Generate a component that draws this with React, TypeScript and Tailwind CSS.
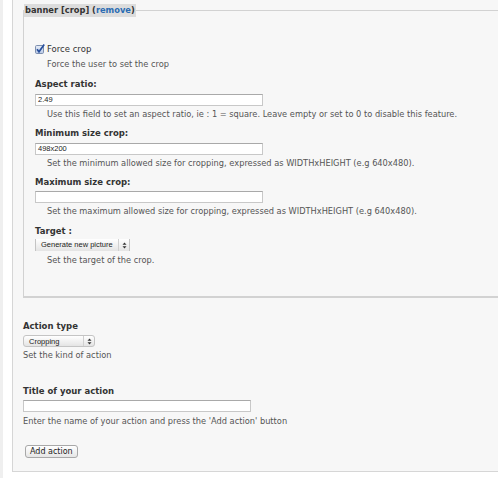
import type { ReactNode } from "react";

const FONT = { fontFamily: '"DejaVu Sans", Verdana, sans-serif' };

function Label({ children }: { children: ReactNode }) {
  return (
    <div className="h-[14px] leading-[14px] text-[8.5px] font-bold text-[#333]">
      {children}
    </div>
  );
}

function Help({ children, indent = true }: { children: ReactNode; indent?: boolean }) {
  return (
    <div
      className={`h-[14px] leading-[14px] text-[8.25px] text-[#555] whitespace-nowrap ${
        indent ? "pl-[12px]" : ""
      }`}
    >
      {children}
    </div>
  );
}

function TextInput({ value, className = "" }: { value?: string; className?: string }) {
  return (
    <div
      className={`h-[12px] w-[228px] bg-white border border-[#c8c8c8] border-t-[#a9a9a9] pl-[2px] text-[7.5px] leading-[10px] text-[#222] ${className}`}
      style={{ fontFamily: '"Liberation Sans", Arial, sans-serif' }}
    >
      {value}
    </div>
  );
}

function Arrows() {
  return (
    <svg width="5" height="7" viewBox="0 0 5 7">
      <path d="M2.5 0.5 L4.5 2.8 L0.5 2.8 Z" fill="#333" />
      <path d="M2.5 6.5 L4.5 4.2 L0.5 4.2 Z" fill="#333" />
    </svg>
  );
}

function Select({ label, width, rounded }: { label: string; width: string; rounded?: boolean }) {
  return (
    <div
      className={`flex h-[12px] items-stretch border border-[#c4c4c4] bg-gradient-to-b from-[#ffffff] to-[#e4e4e4] text-[7.5px] text-[#222] ${width} ${
        rounded ? "rounded-[3px]" : "border-y-0"
      }`}
      style={{ fontFamily: '"Liberation Sans", Arial, sans-serif' }}
    >
      <div className="flex-1 pl-[5px] leading-[11px] whitespace-nowrap">{label}</div>
      <div className="flex w-[11px] items-center justify-center border-l border-[#d0d0d0]">
        <Arrows />
      </div>
    </div>
  );
}

function Checkbox() {
  return (
    <svg width="10" height="10" viewBox="0 0 10 10">
      <defs>
        <linearGradient id="cb" x1="0" y1="0" x2="0" y2="1">
          <stop offset="0" stopColor="#e8eef8" />
          <stop offset="1" stopColor="#b9c9e6" />
        </linearGradient>
      </defs>
      <rect x="0.5" y="1.5" width="8" height="8" rx="1.2" fill="url(#cb)" stroke="#7d8fae" />
      <path d="M2 5.2 L4 7.8 L9.2 0.6" fill="none" stroke="#274f9c" strokeWidth="1.7" />
    </svg>
  );
}

export default function App() {
  return (
    <div className="h-[478px] w-[498px] overflow-hidden bg-white" style={FONT}>
      <div className="h-full border-l-[3px] border-[#efefef] pl-[9px]">
        <div className="w-[520px] border-l border-b border-[#d6d6d6] bg-[#f7f7f7] pl-[10px] pt-[4px] pb-[10px]">
          <fieldset className="border border-[#d2d2d2] border-b-2 p-0">
            <legend className="ml-0 h-[13px] bg-[#dcdcdc] pr-[1px] pl-[1px] text-[8.3px] font-bold leading-[13px] text-[#333]">
              banner [crop] (<span className="text-[#2b6cb3]">remove</span>)
            </legend>
            <div className="pl-[11px] pt-[25px] pb-[29px]">
              <div className="flex h-[14px] items-center gap-[2px]">
                <Checkbox />
                <span className="text-[8.5px] text-[#333]">Force crop</span>
              </div>
              <div className="mt-[1px]">
                <Help>Force the user to set the crop</Help>
              </div>

              <div className="mt-[6px]">
                <Label>Aspect ratio:</Label>
              </div>
              <TextInput value="2.49" className="mt-[3px]" />
              <div className="mt-[1px]">
                <Help>
                  Use this field to set an aspect ratio, ie : 1 = square. Leave empty or set to 0 to
                  disable this feature.
                </Help>
              </div>

              <div className="mt-[5px]">
                <Label>Minimum size crop:</Label>
              </div>
              <TextInput value="498x200" className="mt-[3px]" />
              <div className="mt-[1px]">
                <Help>
                  Set the minimum allowed size for cropping, expressed as WIDTHxHEIGHT (e.g 640x480).
                </Help>
              </div>

              <div className="mt-[5px]">
                <Label>Maximum size crop:</Label>
              </div>
              <TextInput className="mt-[2px]" />
              <div className="mt-[1px]">
                <Help>
                  Set the maximum allowed size for cropping, expressed as WIDTHxHEIGHT (e.g 640x480).
                </Help>
              </div>

              <div className="mt-[6px]">
                <Label>Target :</Label>
              </div>
              <div className="mt-[1px]">
                <Select label="Generate new picture" width="w-[95px]" />
              </div>
              <div className="mt-[2px]">
                <Help>Set the target of the crop.</Help>
              </div>
            </div>
          </fieldset>

          <div className="mt-[21px]">
            <Label>Action type</Label>
          </div>
          <div className="mt-[2px]">
            <Select label="Cropping" width="w-[72px]" rounded />
          </div>
          <div className="mt-[1px]">
            <Help indent={false}>Set the kind of action</Help>
          </div>

          <div className="mt-[22px]">
            <Label>Title of your action</Label>
          </div>
          <TextInput className="mt-[2px]" />
          <div className="mt-[2px]">
            <Help indent={false}>
              Enter the name of your action and press the 'Add action' button
            </Help>
          </div>

          <button className="mt-[17px] ml-[2px] h-[13px] rounded-[3px] border border-[#a8a8a8] bg-gradient-to-b from-white to-[#e6e6e6] px-[4px] text-[8px] leading-[11px] text-[#222]">
            Add action
          </button>
        </div>
      </div>
    </div>
  );
}
